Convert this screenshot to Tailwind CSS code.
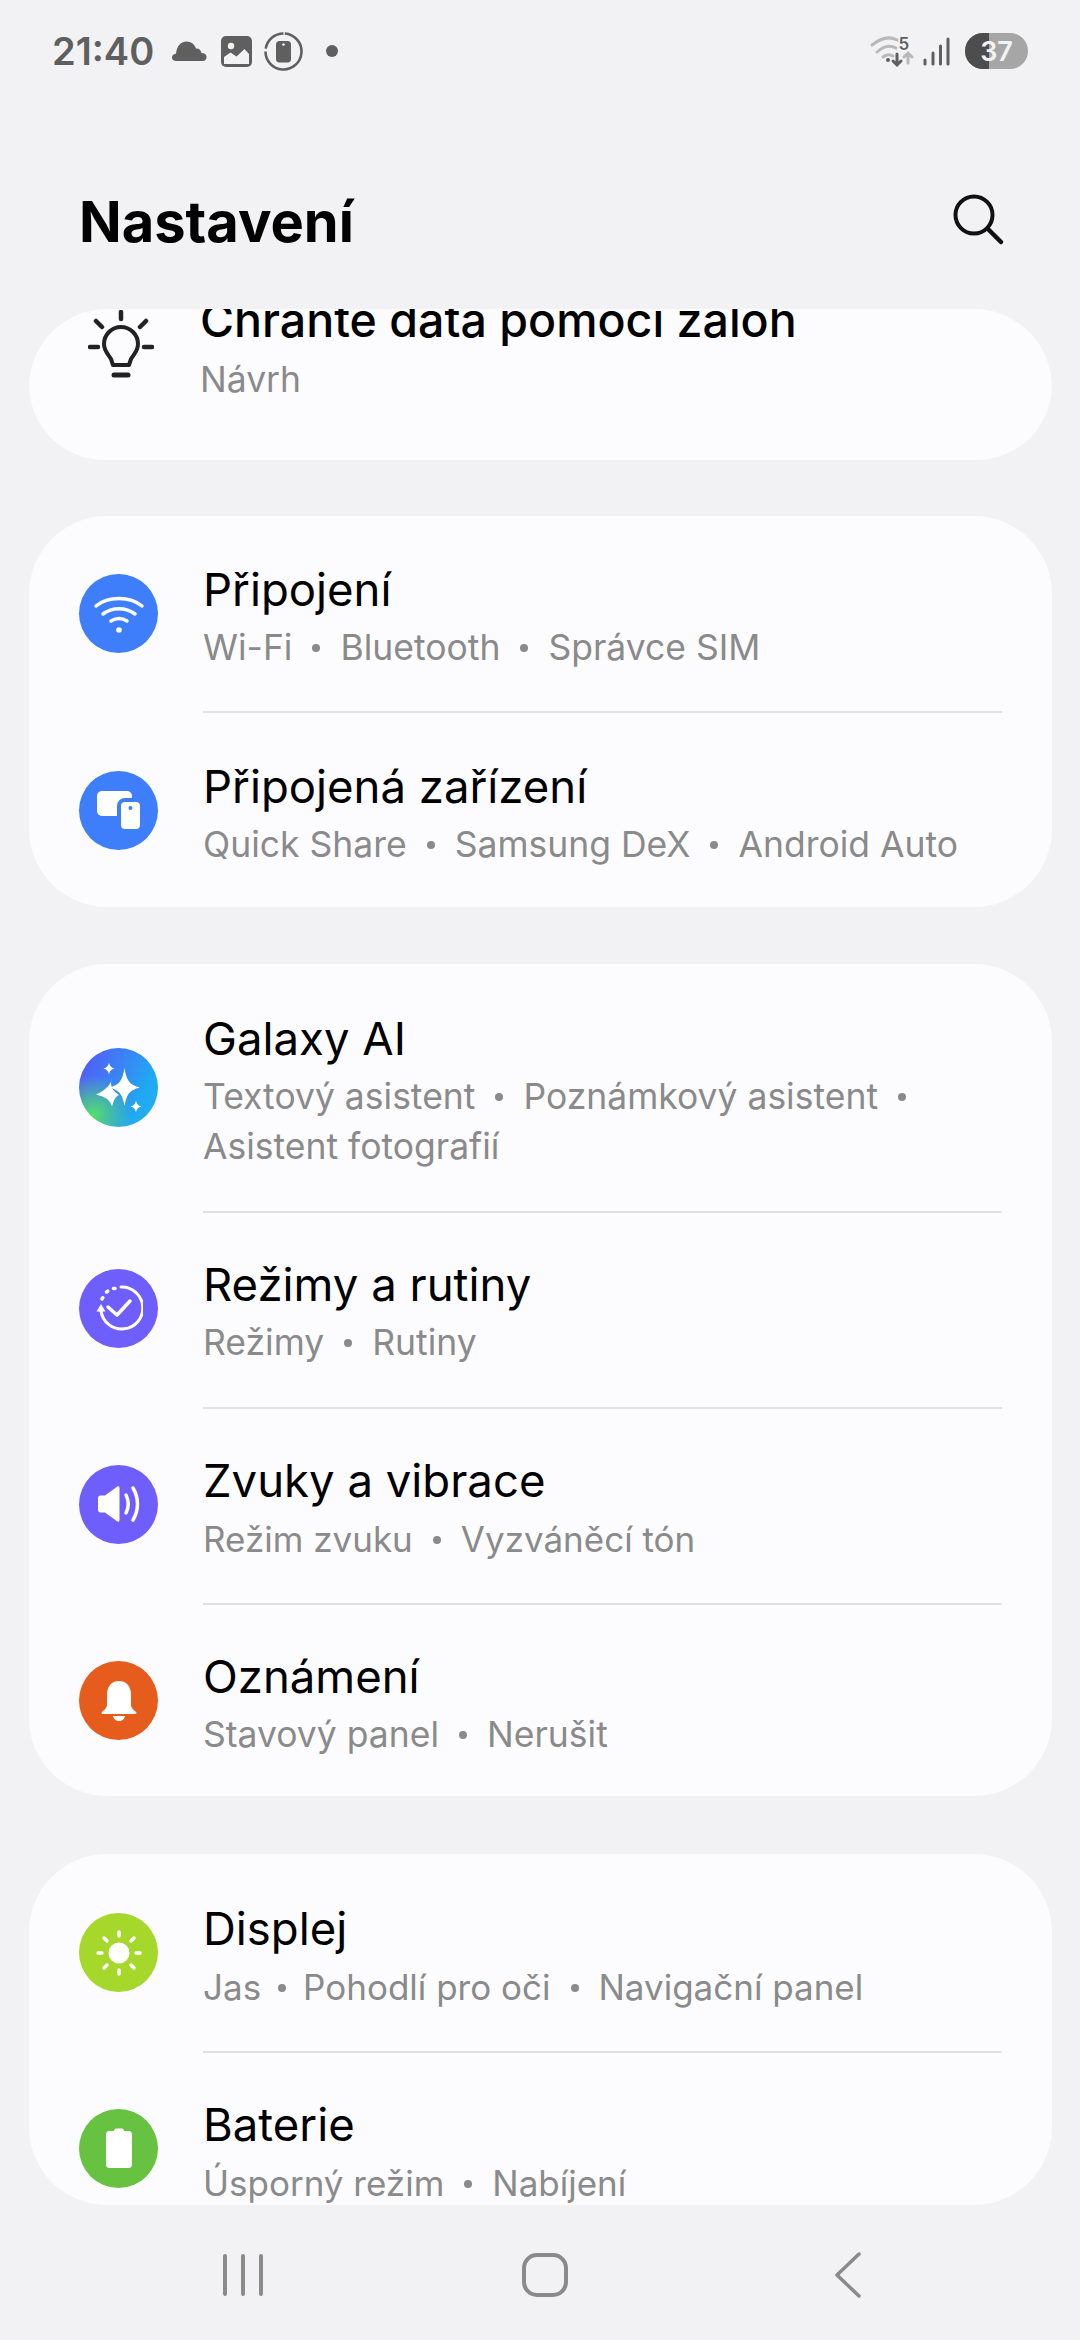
<!DOCTYPE html>
<html lang="cs"><head><meta charset="utf-8"><script src="https://cdn.jsdelivr.net/npm/@tailwindcss/browser@4"></script></head>
<body class="m-0 bg-[#f2f2f4] font-['Inter','Noto_Sans',sans-serif]">
<div class="w-[1080px] h-[2340px] flex flex-col overflow-hidden bg-[#f2f2f4]">

<!-- status bar -->
<div class="h-[102px] flex items-center justify-between pl-[52px] pr-[52px] shrink-0">
  <div class="flex items-center">
    <span class="text-[38px] font-semibold text-[#5f5f5f] leading-none w-[101px]">21:40</span>
    <svg class="ml-[18px]" width="37" height="22" viewBox="0 0 36 22"><path fill="#5f5f5f" d="M5 21c-3 0-4.500-1.500-4.500-3.500 0-2 1.500-3.500 3.500-3.500 0-.3.300-.6.600-.8C5 7 9 1.500 15 1.500c5 0 8 3 9.500 7 3-.3 5 1.500 5.500 4.500 3 0 5 1.500 5 4s-1.500 4-4 4z"/></svg>
    <svg class="ml-[13px]" width="31" height="31" viewBox="0 0 31 31"><rect x="0" y="0" width="31" height="31" rx="5" fill="#5f5f5f"/><circle cx="10" cy="10" r="3.200" fill="#f2f2f4"/><path d="M3 28v-7l6.500-4.500 6 4 8-7.500 4.500 5v10z" fill="#f2f2f4"/></svg>
    <svg class="ml-[12px]" width="39" height="39" viewBox="0 0 39 39"><circle cx="19.500" cy="19.500" r="18" fill="none" stroke="#5f5f5f" stroke-width="2.600" stroke-dasharray="83 3 25 3" transform="rotate(-86 19.500 19.500)"/><rect x="12" y="9" width="15" height="21.500" rx="3.500" fill="#5f5f5f"/><circle cx="19.500" cy="12.500" r="1.300" fill="#f2f2f4"/></svg>
    <span class="ml-[23px] w-[12px] h-[12px] rounded-full bg-[#5f5f5f]"></span>
  </div>
  <div class="flex items-center">
    <svg width="46" height="34" viewBox="0 0 46 34"><g fill="none" stroke-linecap="round" stroke-width="3"><path stroke="#b8b8b8" d="M2 11Q16 0 27 6"/><path stroke="#b8b8b8" d="M7 18Q17 9 26 14"/><path stroke="#b8b8b8" d="M13 23Q18 19 23 22"/><path stroke="#5f5f5f" d="M27 20v11M23 27l4 4 4-4"/><path stroke="#b8b8b8" d="M38 29v-10M34 23l4-4 4 4"/></g><circle cx="18" cy="26" r="2" fill="#5f5f5f"/><text x="28.500" y="16" font-size="17" font-weight="600" fill="#5f5f5f">5</text></svg>
    <svg class="ml-[7px]" width="28" height="32" viewBox="0 0 28 32"><g stroke="#5f5f5f" stroke-width="3" stroke-linecap="round"><path d="M2 29v-4"/><path d="M10 29v-11"/><path d="M17.500 29v-18"/><path d="M25 29v-25"/></g></svg>
    <div class="ml-[14px] w-[63px] h-[36px] rounded-full bg-[#a6a6a6] overflow-hidden relative flex items-center justify-center">
      <div class="absolute left-0 top-0 bottom-0 w-[24px] bg-[#4d4d4d]"></div>
      <span class="relative text-[27px] font-semibold text-[#f2f2f4] leading-none">37</span>
    </div>
  </div>
</div>

<!-- header -->
<div class="h-[207px] flex items-center justify-between pl-[79px] pr-[74px] shrink-0">
  <h1 class="text-[56px] font-bold text-black leading-none pt-[32px]">Nastavení</h1>
  <svg class="mt-[28px]" width="54" height="54" viewBox="0 0 54 54"><circle cx="22" cy="22" r="18.500" fill="none" stroke="#111" stroke-width="4"/><path d="M36 36l13 13" stroke="#111" stroke-width="4.500" stroke-linecap="round"/></svg>
</div>

<!-- scrolling list -->
<div class="ml-[29px] w-[1023px] h-[1896px] rounded-[78px] overflow-hidden shrink-0 flex flex-col">

  <div class="h-[151px] bg-[#fcfcff] rounded-[78px] shrink-0">
    <div class="flex items-start h-full">
      <svg class="ml-[59px] mt-[1px] shrink-0" width="66" height="68" viewBox="0 0 66 68"><g fill="none" stroke="#222" stroke-linecap="round" stroke-linejoin="round"><path stroke-width="4.500" d="M33 2v7M8 11l6 6M58 11l-6 6M2 37h8M56 37h8"/><path stroke-width="4" d="M25 55h16l2-6c3-5 7-8 7-15a17 17 0 0 0-34 0c0 7 4 10 7 15z"/><path stroke-width="5" d="M26 65h14"/></g></svg>
      <div class="ml-[46px] -mt-[19px]">
        <div class="text-[46.500px] leading-[60px] font-medium text-black whitespace-nowrap">Chraňte data pomocí záloh</div>
        <div class="mt-[5px] text-[35.500px] leading-[50px] text-[#8a8a8a]">Návrh</div>
      </div>
    </div>
  </div>

  <div class="mt-[56px] bg-[#fcfcff] rounded-[78px] shrink-0">
    <div class="h-[195px] flex items-center">
      <div class="ml-[50px] w-[79px] h-[79px] rounded-full bg-[#3e7efb] flex items-center justify-center shrink-0"><svg width="52" height="40" viewBox="0 0 52 40" fill="none" stroke="#fff" stroke-linecap="round" stroke-width="3.500"><path d="M3 12C15 2 37 2 49 12"/><path d="M10 20c9-7 23-7 32 0"/><path d="M18 27c5-3 11-3 16 0"/><circle cx="26" cy="36" r="2.800" fill="#fff" stroke="none"/></svg></div>
      <div class="ml-[45px] mt-[2px]"><div class="text-[45.500px] leading-[67px] text-black">Připojení</div><div class="text-[35.500px] leading-[50px] text-[#8a8a8a] whitespace-nowrap">Wi-Fi<span class="inline-block w-[8px] h-[8px] mx-[20px] rounded-full bg-[#8a8a8a] align-[0.22em]"></span>Bluetooth<span class="inline-block w-[8px] h-[8px] mx-[20px] rounded-full bg-[#8a8a8a] align-[0.22em]"></span>Správce SIM</div></div>
    </div>
    <div class="ml-[174px] mr-[50px] h-[2px] bg-[#e2e2e4]"></div>
    <div class="h-[194px] flex items-center">
      <div class="ml-[50px] w-[79px] h-[79px] rounded-full bg-[#3e7efb] flex items-center justify-center shrink-0"><svg width="44" height="38" viewBox="0 0 44 38"><rect x="0" y="0" width="35" height="25" rx="5" fill="#fff"/><rect x="22" y="9" width="23" height="31" rx="6" fill="#fff" stroke="#3e7efb" stroke-width="4"/><circle cx="33.500" cy="17" r="2" fill="#3e7efb"/></svg></div>
      <div class="ml-[45px] mt-[2px]"><div class="text-[45.500px] leading-[67px] text-black">Připojená zařízení</div><div class="text-[35.500px] leading-[50px] text-[#8a8a8a] whitespace-nowrap">Quick Share<span class="inline-block w-[8px] h-[8px] mx-[20px] rounded-full bg-[#8a8a8a] align-[0.22em]"></span>Samsung DeX<span class="inline-block w-[8px] h-[8px] mx-[20px] rounded-full bg-[#8a8a8a] align-[0.22em]"></span>Android Auto</div></div>
    </div>
  </div>

  <div class="mt-[57px] bg-[#fcfcff] rounded-[78px] shrink-0">
    <div class="h-[247px] flex items-center">
      <div class="ml-[50px] w-[79px] h-[79px] rounded-full bg-[radial-gradient(circle_at_18%_85%,#52e06a_0%,rgba(82,224,106,0)_42%),linear-gradient(115deg,#4f63f6_15%,#1fa9f4_75%,#25b4e6_100%)] shrink-0"><svg width="79" height="79" viewBox="0 0 79 79" fill="#fff"><path d="M45.500 20C47.500 32 50 37 61 39.500 50 42 47.500 47 45.500 58 43.500 47 41 42 30 39.500 41 37 43.500 32 45.500 20z"/><path d="M33 30C32.500 35 28 42 17 46.500 27 49 31 52 33 58.500 35 52 36 49 40 47 34 43 30 38 33 30z"/><path d="M30 14.500C30.800 18 32 19.500 35.500 20.500 32 21.500 30.800 23 30 26.500 29.200 23 28 21.500 24.500 20.500 28 19.500 29.200 18 30 14.500z"/><path d="M57 52.500C57.800 56 59 57.500 62.500 58.500 59 59.500 57.800 61 57 64.500 56.200 61 55 59.500 51.500 58.500 55 57.500 56.200 56 57 52.500z"/></svg></div>
      <div class="ml-[45px] mt-[2px]"><div class="text-[45.500px] leading-[67px] text-black">Galaxy AI</div><div class="text-[35.500px] leading-[50px] text-[#8a8a8a]"><div class="whitespace-nowrap">Textový asistent<span class="inline-block w-[8px] h-[8px] mx-[20px] rounded-full bg-[#8a8a8a] align-[0.22em]"></span>Poznámkový asistent<span class="inline-block w-[8px] h-[8px] mx-[20px] rounded-full bg-[#8a8a8a] align-[0.22em]"></span></div><div>Asistent fotografií</div></div></div>
    </div>
    <div class="ml-[174px] mr-[50px] h-[2px] bg-[#e2e2e4]"></div>
    <div class="h-[194px] pb-[4px] flex items-center">
      <div class="ml-[50px] w-[79px] h-[79px] rounded-full bg-[#6e5ffd] flex items-center justify-center shrink-0"><svg width="48" height="48" viewBox="0 0 48 48" fill="none" stroke="#fff" stroke-linecap="round" stroke-linejoin="round"><path stroke-width="3" d="M26 3a21 21 0 1 1-20 24"/><path d="M1.500 27.500L6 20l4.500 7.500z" fill="#fff" stroke="none"/><path stroke-width="3.500" d="M18.500 4.500h1.500M11.500 8l1.200-.8M7 15l.8-1.200"/><path stroke-width="3.500" d="M13 23l9 8 13-14"/></svg></div>
      <div class="ml-[45px] mt-[2px]"><div class="text-[45.500px] leading-[67px] text-black">Režimy a rutiny</div><div class="text-[35.500px] leading-[50px] text-[#8a8a8a] whitespace-nowrap">Režimy<span class="inline-block w-[8px] h-[8px] mx-[20px] rounded-full bg-[#8a8a8a] align-[0.22em]"></span>Rutiny</div></div>
    </div>
    <div class="ml-[174px] mr-[50px] h-[2px] bg-[#e2e2e4]"></div>
    <div class="h-[194px] pb-[4px] flex items-center">
      <div class="ml-[50px] w-[79px] h-[79px] rounded-full bg-[#6e5ffd] flex items-center justify-center shrink-0"><svg width="44" height="36" viewBox="0 0 44 36"><path fill="#fff" d="M1 12c0-1.500 1-2.500 2.500-2.500H8L20 .8c1.500-1 2.500-.3 2.500 1.500v31.400c0 1.800-1 2.500-2.500 1.500L8 26.500H3.500C2 26.500 1 25.500 1 24z"/><path fill="none" stroke="#fff" stroke-width="3.500" stroke-linecap="round" d="M29 9c3 6 3 12 0 18"/><path fill="none" stroke="#fff" stroke-width="3.500" stroke-linecap="round" d="M36 2c6 10 6 22 0 32"/></svg></div>
      <div class="ml-[45px] mt-[2px]"><div class="text-[45.500px] leading-[67px] text-black">Zvuky a vibrace</div><div class="text-[35px] leading-[50px] text-[#8a8a8a] whitespace-nowrap">Režim zvuku<span class="inline-block w-[8px] h-[8px] mx-[20px] rounded-full bg-[#8a8a8a] align-[0.22em]"></span>Vyzváněcí tón</div></div>
    </div>
    <div class="ml-[174px] mr-[50px] h-[2px] bg-[#e2e2e4]"></div>
    <div class="h-[191px] flex items-center">
      <div class="ml-[50px] w-[79px] h-[79px] rounded-full bg-[#e65c1c] flex items-center justify-center shrink-0"><svg width="36" height="40" viewBox="0 0 36 40" fill="#fff"><path d="M18 0C26 0 30 6 30 14v10c0 3 3 5 5 7 1 1 .5 2-1 2H2c-1.500 0-2-1-1-2 2-2 5-4 5-7V14C6 6 10 0 18 0z"/><path d="M12 35h12c-.5 3-3 5-6 5s-5.500-2-6-5z"/></svg></div>
      <div class="ml-[45px] mt-[2px]"><div class="text-[45.500px] leading-[67px] text-black">Oznámení</div><div class="text-[35.500px] leading-[50px] text-[#8a8a8a] whitespace-nowrap">Stavový panel<span class="inline-block w-[8px] h-[8px] mx-[20px] rounded-full bg-[#8a8a8a] align-[0.22em]"></span>Nerušit</div></div>
    </div>
  </div>

  <div class="mt-[58px] bg-[#fcfcff] rounded-t-[78px] shrink-0 flex-1">
    <div class="h-[197px] flex items-center">
      <div class="ml-[50px] w-[79px] h-[79px] rounded-full bg-[#a5d82b] flex items-center justify-center shrink-0"><svg width="46" height="46" viewBox="0 0 46 46"><circle cx="23" cy="23" r="10.500" fill="#fff"/><g stroke="#fff" stroke-width="3.500" stroke-linecap="round"><path d="M23 2v4M23 40v4M2 23h4M40 23h4M8 8l3 3M38 8l-3 3M8 38l3-3M38 38l-3-3"/></g></svg></div>
      <div class="ml-[45px] mt-[2px]"><div class="text-[45.500px] leading-[67px] text-black">Displej</div><div class="text-[35px] leading-[50px] text-[#8a8a8a] whitespace-nowrap">Jas<span class="inline-block w-[8px] h-[8px] mx-[17px] rounded-full bg-[#8a8a8a] align-[0.22em]"></span>Pohodlí pro oči<span class="inline-block w-[8px] h-[8px] mx-[20px] rounded-full bg-[#8a8a8a] align-[0.22em]"></span>Navigační panel</div></div>
    </div>
    <div class="ml-[174px] mr-[50px] h-[2px] bg-[#e2e2e4]"></div>
    <div class="h-[194px] pb-[4px] flex items-center">
      <div class="ml-[50px] w-[79px] h-[79px] rounded-full bg-[#66c240] flex items-center justify-center shrink-0"><svg width="26" height="40" viewBox="0 0 26 40" fill="#fff"><path d="M8 3c0-1.500 1-2.500 2-2.500h6c1 0 2 1 2 2.500h5c1.500 0 3 1.500 3 3v31c0 1.500-1.500 3-3 3H3c-1.500 0-3-1.500-3-3V6c0-1.500 1.500-3 3-3z"/></svg></div>
      <div class="ml-[45px] mt-[2px]"><div class="text-[45.500px] leading-[67px] text-black">Baterie</div><div class="text-[35px] leading-[50px] text-[#8a8a8a] whitespace-nowrap">Úsporný režim<span class="inline-block w-[8px] h-[8px] mx-[20px] rounded-full bg-[#8a8a8a] align-[0.22em]"></span>Nabíjení</div></div>
    </div>
  </div>
</div>

<!-- nav bar -->
<div class="flex-1">
  <div class="h-full flex items-center pt-[4px]">
    <div class="ml-[223px] flex gap-[14px]"><span class="w-[4px] h-[42px] rounded-full bg-[#8a8a8a]"></span><span class="w-[4px] h-[42px] rounded-full bg-[#8a8a8a]"></span><span class="w-[4px] h-[42px] rounded-full bg-[#8a8a8a]"></span></div>
    <div class="ml-[259px] w-[46px] h-[44px] rounded-[15px] border-[4px] border-[#8a8a8a]"></div>
    <svg class="ml-[266px]" width="27" height="46" viewBox="0 0 27 46" fill="none"><path d="M25 2L3 23l22 21" stroke="#8a8a8a" stroke-width="3.500" stroke-linecap="round" stroke-linejoin="round"/></svg>
  </div>
</div>
</div>
</body></html>
